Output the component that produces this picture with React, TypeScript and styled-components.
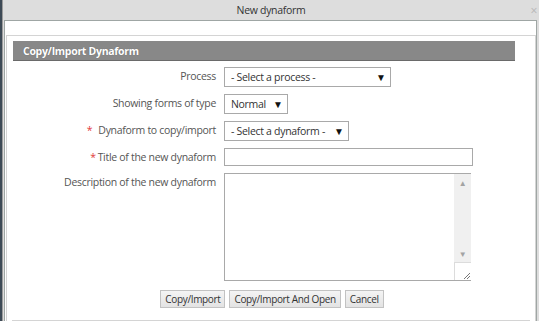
import React from "react";
import styled, { createGlobalStyle } from "styled-components";

const GlobalStyle = createGlobalStyle`
  html, body {
    margin: 0;
    padding: 0;
    height: 100%;
    overflow: hidden;
    background: #3d4a56;
    font-family: "Open Sans", "Liberation Sans", sans-serif;
    letter-spacing: -0.3px;
  }
`;

const Dialog = styled.div`
  margin-left: 2px;
  height: 321px;
  background: #dddddd;
  border-left: 1px solid #9c9c9c;
  display: flex;
  flex-direction: column;
`;

const TitleBar = styled.div`
  height: 23px;
  display: flex;
  align-items: center;
  justify-content: center;
  position: relative;
  font-size: 10.5px;
  color: #333;
`;

const CloseButton = styled.span`
  position: absolute;
  right: 2px;
  top: 4px;
  font-size: 12px;
  color: #b5b5b5;
  line-height: 14px;
`;

const Content = styled.div`
  flex: 1;
  margin: 0 2px 0 1px;
  background: #fff;
  border: 1px solid #9fa6a4;
  border-bottom: none;
  padding: 14px 0 0 1px;
  display: flex;
  flex-direction: column;
`;

const Panel = styled.div`
  flex: 1;
  border: 1px solid #d4d4d4;
  border-bottom: none;
  padding: 5px 5px 0 5px;
`;

const Body = styled.div`
  border-bottom: 1px solid #d4d4d4;
  height: 279px;
`;

const PanelHeader = styled.div`
  height: 19px;
  margin: 0 15px 0 1px;
  background: #888888;
  border-bottom: 1px solid #6a6a6a;
  color: #fff;
  font-weight: 700;
  font-size: 10.5px;
  display: flex;
  align-items: center;
  padding-left: 10px;
  text-shadow: 0 0 1px rgba(0, 0, 0, 0.3);
`;

const Form = styled.div`
  display: grid;
  grid-template-columns: 209px 1fr;
  column-gap: 8px;
  row-gap: 7px;
  margin: 6px -5px 0 -5px;
  align-items: start;
`;

const Label = styled.div`
  text-align: right;
  font-size: 10.5px;
  line-height: 16px;
  padding-top: 1px;
  color: #555;
  white-space: nowrap;
`;

const Required = styled.span<{ $gap: number }>`
  color: #e23a3a;
  margin-right: ${(p) => p.$gap}px;
`;

const FakeSelect = styled.div<{ $width: number }>`
  width: ${(p) => p.$width}px;
  height: 20px;
  box-sizing: border-box;
  border: 1px solid #a9a9a9;
  background: #fff;
  display: flex;
  align-items: center;
  justify-content: space-between;
  padding: 0 4px 0 6px;
  font-size: 10.5px;
  color: #333;
  white-space: nowrap;
`;

const Arrow = styled.span`
  font-size: 10px;
  color: #111;
  letter-spacing: 0;
`;

const TextInput = styled.input`
  width: 249px;
  height: 18px;
  box-sizing: border-box;
  border: 1px solid #a9a9a9;
  margin: 0;
  padding: 0 4px;
  font-family: inherit;
  font-size: 11px;
  outline: none;
`;

const AreaBox = styled.div`
  width: 247px;
  height: 108px;
  box-sizing: border-box;
  border: 1px solid #a9a9a9;
  border-right: none;
  display: flex;
`;

const AreaText = styled.textarea`
  flex: 1;
  border: none;
  resize: none;
  outline: none;
  margin: 0;
  padding: 2px;
  font-family: inherit;
  font-size: 11px;
`;

const ScrollBar = styled.div`
  width: 17px;
  display: flex;
  flex-direction: column;
  background: #f0f0f0;
`;

const ScrollArrow = styled.div`
  height: 17px;
  display: flex;
  align-items: center;
  justify-content: center;
  font-size: 8px;
  color: #a3a3a3;
`;

const Track = styled.div`
  flex: 1;
`;

const Grip = styled.div`
  height: 17px;
  background: #fff;
  border-top: 1px solid #dcdcdc;
  border-left: 1px solid #dcdcdc;
  display: flex;
  align-items: flex-end;
  justify-content: flex-end;
`;

const Buttons = styled.div`
  display: flex;
  justify-content: center;
  gap: 4px;
  margin-top: 9px;
  padding-left: 2px;
`;

const Button = styled.button`
  height: 18px;
  box-sizing: border-box;
  padding: 0 4px;
  border: 1px solid #c2c2c2;
  background: linear-gradient(#f4f4f4, #e3e3e3);
  font-family: inherit;
  font-size: 10px;
  letter-spacing: -0.35px;
  color: #333;
  line-height: 14px;
`;

const App: React.FC = () => {
  return (
    <>
      <GlobalStyle />
      <Dialog>
        <TitleBar>
          New dynaform
          <CloseButton>×</CloseButton>
        </TitleBar>
        <Content>
          <Panel>
            <Body>
              <PanelHeader>Copy/Import Dynaform</PanelHeader>
              <Form>
                <Label>Process</Label>
                <FakeSelect $width={167}>
                  - Select a process -<Arrow>▼</Arrow>
                </FakeSelect>

                <Label>Showing forms of type</Label>
                <FakeSelect $width={64}>
                  Normal<Arrow>▼</Arrow>
                </FakeSelect>

                <Label>
                  <Required $gap={6}>*</Required>Dynaform to copy/import
                </Label>
                <FakeSelect $width={125}>
                  - Select a dynaform -<Arrow>▼</Arrow>
                </FakeSelect>

                <Label>
                  <Required $gap={2}>*</Required>Title of the new dynaform
                </Label>
                <TextInput />

                <Label>Description of the new dynaform</Label>
                <AreaBox>
                  <AreaText />
                  <ScrollBar>
                    <ScrollArrow>▲</ScrollArrow>
                    <Track />
                    <ScrollArrow>▼</ScrollArrow>
                    <Grip>
                      <svg width="9" height="9" viewBox="0 0 9 9">
                        <path d="M8 2 L2 8 M8 5 L5 8" stroke="#777" strokeWidth="1" />
                      </svg>
                    </Grip>
                  </ScrollBar>
                </AreaBox>
              </Form>
              <Buttons>
                <Button>Copy/Import</Button>
                <Button>Copy/Import And Open</Button>
                <Button>Cancel</Button>
              </Buttons>
            </Body>
          </Panel>
        </Content>
      </Dialog>
    </>
  );
};

export default App;
